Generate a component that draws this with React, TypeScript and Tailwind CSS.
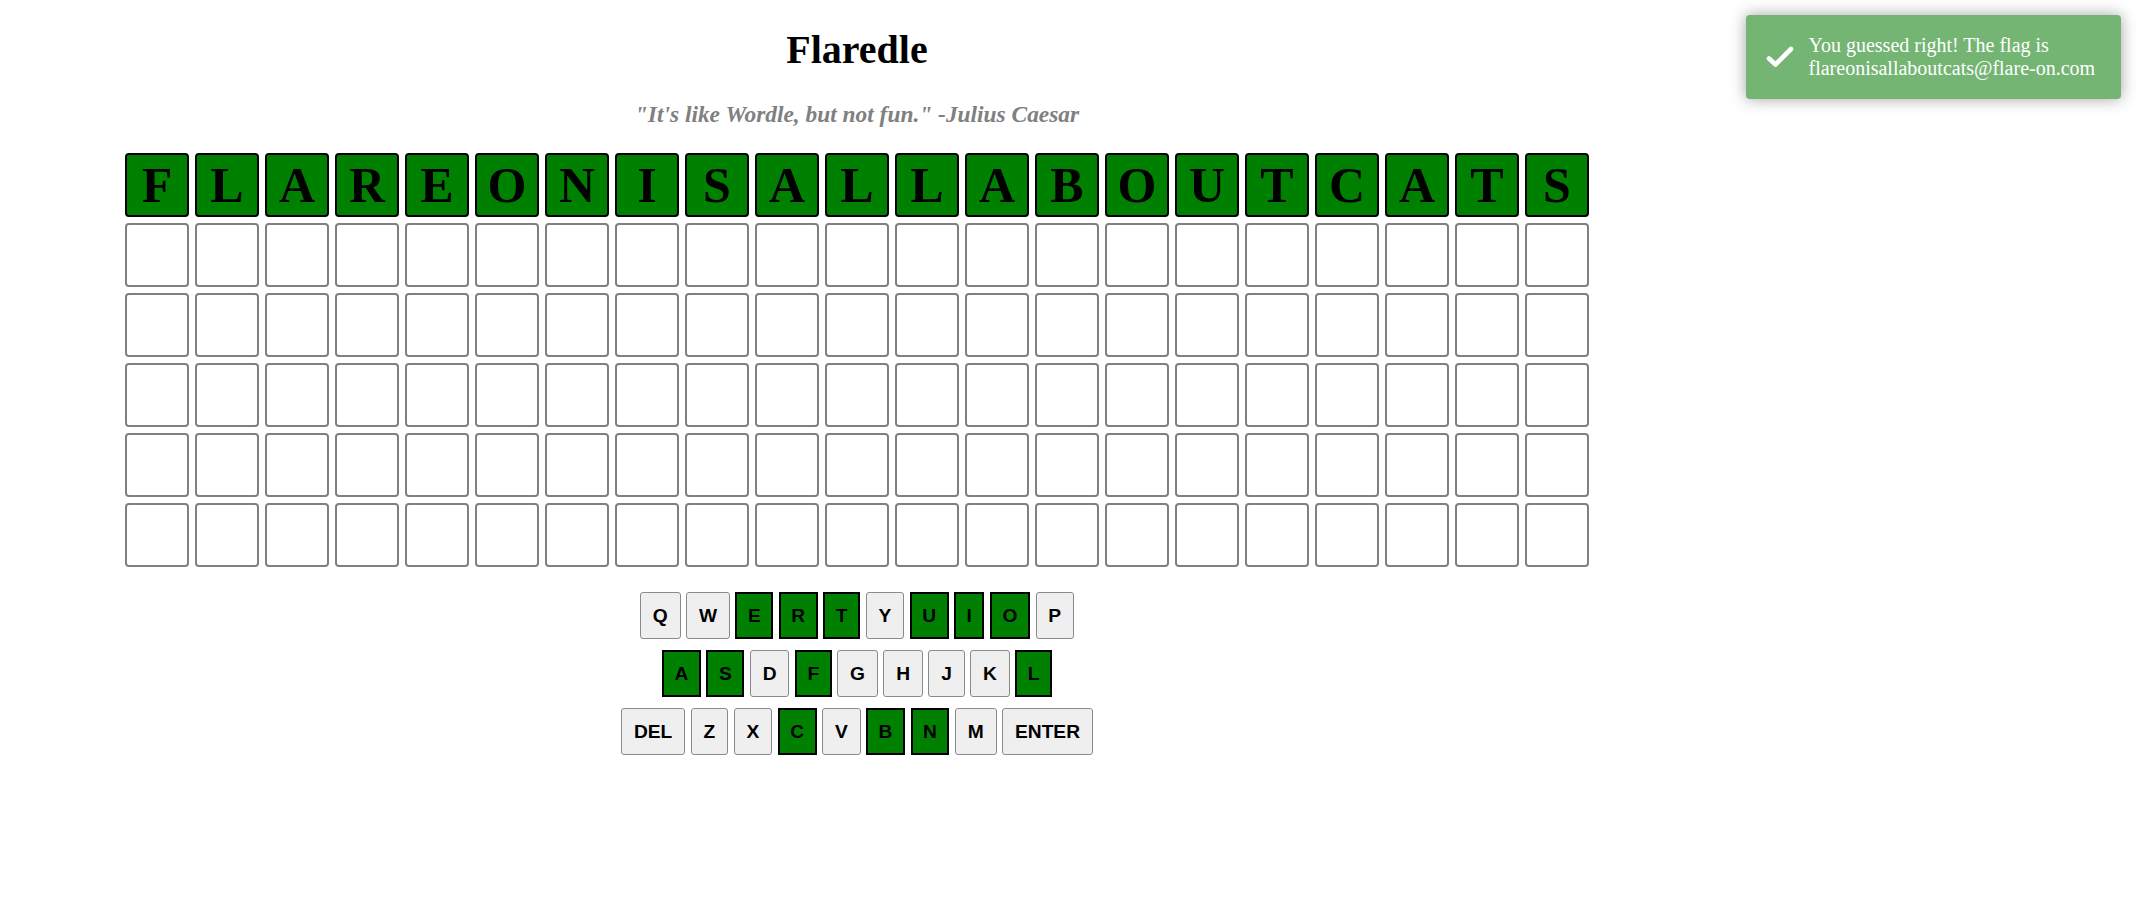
import React from 'react';

const WORD = 'FLAREONISALLABOUTCATS';
const EMPTY_ROWS = 5;
const HITS = new Set(WORD.split(''));

const KEY_ROWS = [
  ['Q', 'W', 'E', 'R', 'T', 'Y', 'U', 'I', 'O', 'P'],
  ['A', 'S', 'D', 'F', 'G', 'H', 'J', 'K', 'L'],
  ['DEL', 'Z', 'X', 'C', 'V', 'B', 'N', 'M', 'ENTER'],
];

const Tile = ({ letter }: { letter?: string }) => {
  if (letter) {
    return (
      <div className="w-[64px] h-[64px] rounded-[4px] border-2 border-black bg-[#008000] flex items-center justify-center text-[50px] leading-[57.5px] font-bold text-black">
        {letter}
      </div>
    );
  }
  return <div className="w-[64px] h-[64px] rounded-[4px] border-2 border-[#808080] bg-white" />;
};

const Key = ({ label }: { label: string }) => {
  const hit = label.length === 1 && HITS.has(label);
  return (
    <button
      className={
        hit
          ? "border-2 border-black bg-[#008000] px-[10.5px] py-[10px] text-[19.2px] leading-[23px] font-bold text-black font-['Liberation_Sans',Arial,sans-serif]"
          : "rounded-[3px] border border-[#8a8a8a] bg-[#efefef] px-[11.8px] py-[11px] text-[19.2px] leading-[23px] font-bold text-black font-['Liberation_Sans',Arial,sans-serif]"
      }
    >
      {label}
    </button>
  );
};

const Toast = () => (
  <div className="absolute top-[15px] right-[15px] w-[375px] rounded-[3.75px] bg-[#74b574] shadow-[0_0_15px_rgba(153,153,153,0.9)] pl-[62.5px] pr-[18.75px] py-[18.75px] text-white text-[20px] leading-[23px]">
    <svg
      className="absolute left-[18.75px] top-1/2 -translate-y-1/2"
      width="30"
      height="30"
      viewBox="0 0 30 30"
      fill="none"
    >
      <path
        d="M4 16.5 L10.5 22.5 L26 7"
        stroke="white"
        strokeWidth="4.6"
        strokeLinecap="round"
        strokeLinejoin="round"
      />
    </svg>
    You guessed right! The flag is flareonisallaboutcats@flare-on.com
  </div>
);

export default function App() {
  return (
    <div className="relative min-h-screen bg-white font-['Liberation_Serif','Times_New_Roman',serif]">
      <div className="w-[1714px] flex flex-col items-center">
        <h1 className="mt-[26.8px] text-[40px] leading-[46px] font-bold text-black">Flaredle</h1>
        <h3 className="mt-[28.6px] text-[23.4px] leading-[27px] font-bold italic text-[#808080]">
          "It's like Wordle, but not fun." -Julius Caesar
        </h3>

        {/* board */}
        <div className="mt-[25px] grid grid-cols-[repeat(21,64px)] gap-[6px]">
          {WORD.split('').map((l, i) => (
            <Tile key={`g${i}`} letter={l} />
          ))}
          {Array.from({ length: EMPTY_ROWS * WORD.length }).map((_, i) => (
            <Tile key={`e${i}`} />
          ))}
        </div>

        {/* keyboard */}
        <div className="mt-[25px] flex flex-col items-center gap-[10.8px]">
          {KEY_ROWS.map((row, r) => (
            <div key={r} className="flex gap-[5.6px]">
              {row.map((k) => (
                <Key key={k} label={k} />
              ))}
            </div>
          ))}
        </div>
      </div>

      <Toast />
    </div>
  );
}
